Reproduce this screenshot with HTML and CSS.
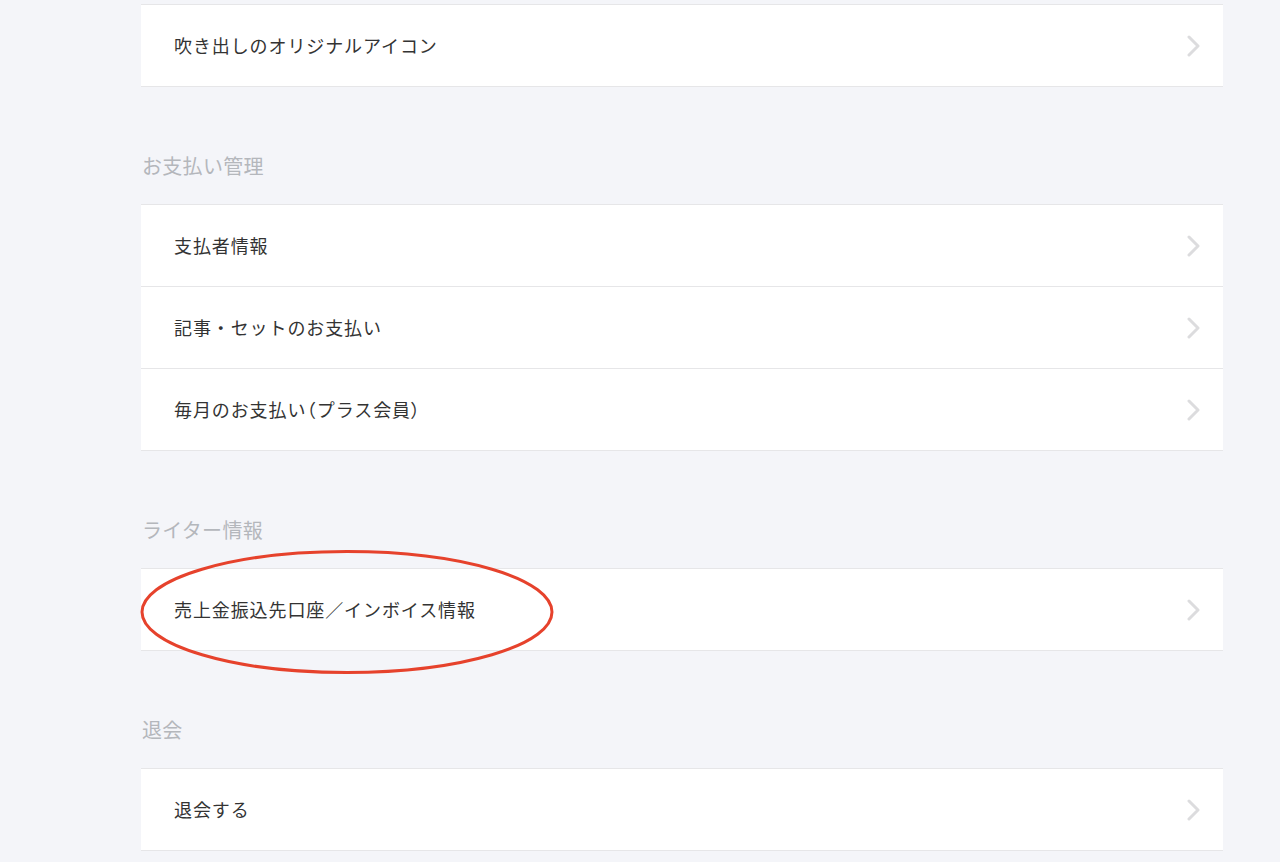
FILE: index.html
```html
<!DOCTYPE html>
<html lang="ja">
<head>
<meta charset="utf-8">
<link rel="stylesheet" href="styles.css">
</head>
<body>
<div class="page">
  <main class="content">
    <ul class="list list-first">
      <li class="row"><span class="label">吹き出しのオリジナルアイコン</span><svg class="chev" viewBox="0 0 14 22"><path d="M2 2 L11 11 L2 20"/></svg></li>
    </ul>

    <h2 class="section-title">お支払い管理</h2>
    <ul class="list">
      <li class="row"><span class="label">支払者情報</span><svg class="chev" viewBox="0 0 14 22"><path d="M2 2 L11 11 L2 20"/></svg></li>
      <li class="row"><span class="label">記事・セットのお支払い</span><svg class="chev" viewBox="0 0 14 22"><path d="M2 2 L11 11 L2 20"/></svg></li>
      <li class="row"><span class="label">毎月のお支払い<span class="paren">（</span>プラス会員<span class="paren">）</span></span><svg class="chev" viewBox="0 0 14 22"><path d="M2 2 L11 11 L2 20"/></svg></li>
    </ul>

    <h2 class="section-title">ライター情報</h2>
    <ul class="list list-marked">
      <li class="row"><span class="label">売上金振込先口座／インボイス情報</span><svg class="chev" viewBox="0 0 14 22"><path d="M2 2 L11 11 L2 20"/></svg></li>
      <svg class="mark" viewBox="0 0 416 130"><ellipse cx="208" cy="65" rx="205" ry="60.5"/></svg>
    </ul>

    <h2 class="section-title">退会</h2>
    <ul class="list">
      <li class="row"><span class="label">退会する</span><svg class="chev" viewBox="0 0 14 22"><path d="M2 2 L11 11 L2 20"/></svg></li>
    </ul>
  </main>
</div>
</body>
</html>
```

FILE: styles.css
```css
html, body {
  margin: 0;
  padding: 0;
  background: #f4f5f9;
}
body {
  font-family: "Noto Sans CJK JP", "Noto Sans", sans-serif;
  color: #333;
  height: 862px;
  overflow: hidden;
}
.page {
  padding-left: 141px;
  padding-top: 4px;
}
.content {
  width: 1082px;
}
.list {
  list-style: none;
  margin: 0;
  padding: 0;
  background: #fff;
  border-top: 1px solid #e6e6e8;
  position: relative;
}
.row {
  height: 81px;
  border-bottom: 1px solid #e6e6e8;
  display: flex;
  align-items: center;
  justify-content: space-between;
  padding: 0 22px 0 33px;
}
.label {
  font-size: 18px;
  color: #333;
  letter-spacing: 0.9px;
  margin-bottom: 2px;
}
.paren {
  font-feature-settings: "palt";
  letter-spacing: 1.5px;
}
.chev {
  width: 14px;
  height: 22px;
  fill: none;
  stroke: #dcdcde;
  stroke-width: 3;
  stroke-linecap: round;
  stroke-linejoin: round;
}
.section-title {
  margin: 0;
  padding: 64px 0 23px 1px;
  font-size: 20px;
  line-height: 30px;
  font-weight: normal;
  color: #b4b7bc;
  letter-spacing: 0.3px;
}
.mark {
  position: absolute;
  left: -2px;
  top: -22px;
  width: 416px;
  height: 130px;
  overflow: visible;
  fill: none;
  stroke: #e6422c;
  stroke-width: 3;
}
```
